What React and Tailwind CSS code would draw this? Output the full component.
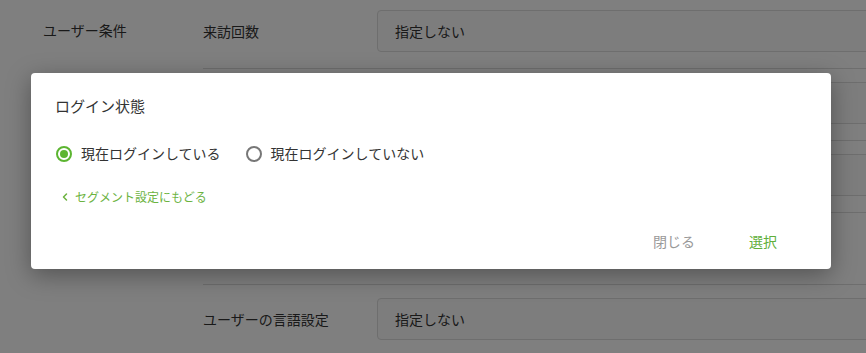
import React, { useState } from 'react';
import { ChevronLeft } from 'lucide-react';

const font = { fontFamily: '"Noto Sans CJK JP", "Noto Sans", sans-serif' };

// one row of the segment form behind the dialog
const Row = ({ label = '', value, field = true, last }) => (
  <div className={`flex items-center pt-[13px] ${last ? '' : 'pb-[16px] border-b border-[#dcdcdc]'}`}>
    <div className="w-[174px] text-[14px] text-[#333]">{label}</div>
    {field ? (
      <div className="flex-1 h-[42px] rounded-[4px] border border-[#dcdcdc] bg-[#fbfbfb] flex items-center pl-[17px] text-[14px] text-[#333]">
        {value}
      </div>
    ) : (
      <div className="flex-1 h-[42px]" />
    )}
  </div>
);

const Radio = ({ checked, label, onClick }) => (
  <button type="button" onClick={onClick} className="flex items-center gap-[9px]">
    <span
      className={`w-[16px] h-[16px] rounded-full border-2 flex items-center justify-center ${
        checked ? 'border-[#5cb531]' : 'border-[#777]'
      }`}
    >
      {checked && <span className="w-[8px] h-[8px] rounded-full bg-[#5cb531]" />}
    </span>
    <span className="text-[14px] text-[#333]">{label}</span>
  </button>
);

export default function App() {
  const [loggedIn, setLoggedIn] = useState(true);

  return (
    <div style={font} className="relative w-[866px] h-[353px] overflow-hidden bg-white">
      {/* page behind the dialog */}
      <div className="flex pl-[43px] -mt-[3px]">
        <div className="w-[160px] pt-[23px] text-[14px] text-[#333]">ユーザー条件</div>
        <div className="flex-1 -mr-[40px]">
          <Row label="来訪回数" value="指定しない" />
          <Row />
          <Row />
          <Row field={false} />
          <Row label="ユーザーの言語設定" value="指定しない" last />
        </div>
      </div>

      {/* overlay */}
      <div className="absolute inset-0 bg-black/50" />

      {/* dialog */}
      <div className="absolute left-[31px] top-[73px] w-[800px] h-[196px] rounded-[4px] bg-white shadow-[0_6px_24px_rgba(0,0,0,0.35)] px-6 pt-[22px]">
        <h2 className="text-[15px] leading-[22px] text-[#333]">ログイン状態</h2>
        <div className="flex items-center gap-[25px] mt-[26px] ml-[1px]">
          <Radio checked={loggedIn} label="現在ログインしている" onClick={() => setLoggedIn(true)} />
          <Radio checked={!loggedIn} label="現在ログインしていない" onClick={() => setLoggedIn(false)} />
        </div>
        <a href="#" className="flex items-center gap-[4px] mt-[24px] ml-[4px] text-[12px] text-[#6cb33f]">
          <ChevronLeft size={12} strokeWidth={3} />
          セグメント設定にもどる
        </a>
        <div className="flex justify-end gap-[54px] pr-[30px] mt-[25px] text-[14px]">
          <button type="button" className="text-[#999]">閉じる</button>
          <button type="button" className="text-[#5faf3a]">選択</button>
        </div>
      </div>
    </div>
  );
}
